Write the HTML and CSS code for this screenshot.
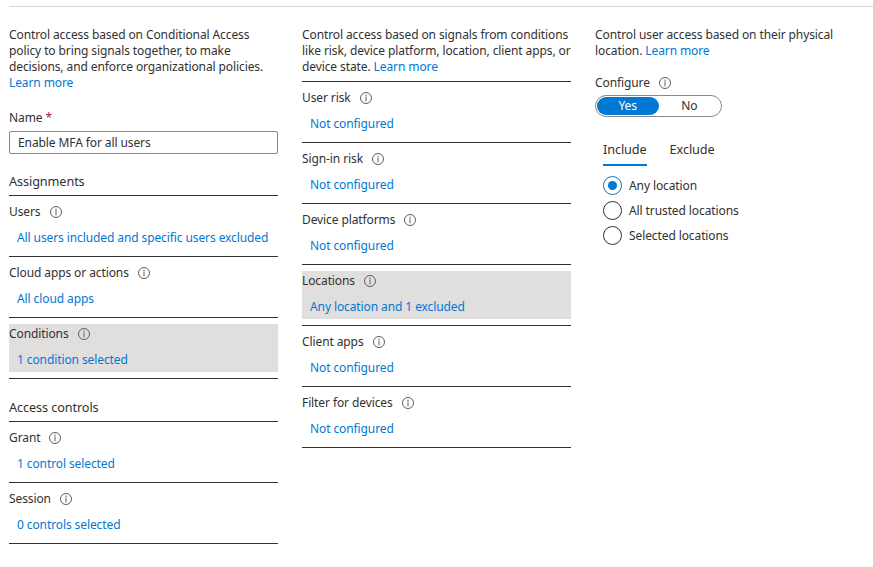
FILE: index.html
```html
<!DOCTYPE html>
<html lang="en">
<head>
<meta charset="utf-8">
<title>Conditional Access policy</title>
<link rel="stylesheet" href="styles.css">
</head>
<body>
<div class="page">
  <div class="topline"></div>
  <div class="columns">
    <section class="col">
      <p class="desc">Control access based on Conditional Access<br>policy to bring signals together, to make<br>decisions, and enforce organizational policies.<br><a class="link" href="#">Learn more</a></p>
      <label class="field-label">Name <span class="req">*</span></label>
      <div class="input">Enable MFA for all users</div>
      <h2 class="section-title">Assignments</h2>
      <div class="row"><div class="row-inner">
        <div class="row-label">Users <svg class="info" viewBox="0 0 12 12"><circle cx="6" cy="6" r="5.5"/><line x1="6" y1="5" x2="6" y2="9"/><line x1="6" y1="3" x2="6" y2="3.8"/></svg></div>
        <a class="row-link" href="#">All users included and specific users excluded</a>
      </div></div>
      <div class="row"><div class="row-inner">
        <div class="row-label">Cloud apps or actions <svg class="info" viewBox="0 0 12 12"><circle cx="6" cy="6" r="5.5"/><line x1="6" y1="5" x2="6" y2="9"/><line x1="6" y1="3" x2="6" y2="3.8"/></svg></div>
        <a class="row-link" href="#">All cloud apps</a>
      </div></div>
      <div class="row"><div class="row-inner selected">
        <div class="row-label">Conditions <svg class="info" viewBox="0 0 12 12"><circle cx="6" cy="6" r="5.5"/><line x1="6" y1="5" x2="6" y2="9"/><line x1="6" y1="3" x2="6" y2="3.8"/></svg></div>
        <a class="row-link" href="#">1 condition selected</a>
      </div></div>
      <h2 class="section-title second">Access controls</h2>
      <div class="row"><div class="row-inner">
        <div class="row-label">Grant <svg class="info" viewBox="0 0 12 12"><circle cx="6" cy="6" r="5.5"/><line x1="6" y1="5" x2="6" y2="9"/><line x1="6" y1="3" x2="6" y2="3.8"/></svg></div>
        <a class="row-link" href="#">1 control selected</a>
      </div></div>
      <div class="row"><div class="row-inner">
        <div class="row-label">Session <svg class="info" viewBox="0 0 12 12"><circle cx="6" cy="6" r="5.5"/><line x1="6" y1="5" x2="6" y2="9"/><line x1="6" y1="3" x2="6" y2="3.8"/></svg></div>
        <a class="row-link" href="#">0 controls selected</a>
      </div></div>
    </section>

    <section class="col">
      <p class="desc desc-ruled">Control access based on signals from conditions<br>like risk, device platform, location, client apps, or<br>device state. <a class="link" href="#">Learn more</a></p>
      <div class="row"><div class="row-inner">
        <div class="row-label">User risk <svg class="info" viewBox="0 0 12 12"><circle cx="6" cy="6" r="5.5"/><line x1="6" y1="5" x2="6" y2="9"/><line x1="6" y1="3" x2="6" y2="3.8"/></svg></div>
        <a class="row-link" href="#">Not configured</a>
      </div></div>
      <div class="row"><div class="row-inner">
        <div class="row-label">Sign-in risk <svg class="info" viewBox="0 0 12 12"><circle cx="6" cy="6" r="5.5"/><line x1="6" y1="5" x2="6" y2="9"/><line x1="6" y1="3" x2="6" y2="3.8"/></svg></div>
        <a class="row-link" href="#">Not configured</a>
      </div></div>
      <div class="row"><div class="row-inner">
        <div class="row-label">Device platforms <svg class="info" viewBox="0 0 12 12"><circle cx="6" cy="6" r="5.5"/><line x1="6" y1="5" x2="6" y2="9"/><line x1="6" y1="3" x2="6" y2="3.8"/></svg></div>
        <a class="row-link" href="#">Not configured</a>
      </div></div>
      <div class="row"><div class="row-inner selected">
        <div class="row-label">Locations <svg class="info" viewBox="0 0 12 12"><circle cx="6" cy="6" r="5.5"/><line x1="6" y1="5" x2="6" y2="9"/><line x1="6" y1="3" x2="6" y2="3.8"/></svg></div>
        <a class="row-link" href="#">Any location and 1 excluded</a>
      </div></div>
      <div class="row"><div class="row-inner">
        <div class="row-label">Client apps <svg class="info" viewBox="0 0 12 12"><circle cx="6" cy="6" r="5.5"/><line x1="6" y1="5" x2="6" y2="9"/><line x1="6" y1="3" x2="6" y2="3.8"/></svg></div>
        <a class="row-link" href="#">Not configured</a>
      </div></div>
      <div class="row"><div class="row-inner">
        <div class="row-label">Filter for devices <svg class="info" viewBox="0 0 12 12"><circle cx="6" cy="6" r="5.5"/><line x1="6" y1="5" x2="6" y2="9"/><line x1="6" y1="3" x2="6" y2="3.8"/></svg></div>
        <a class="row-link" href="#">Not configured</a>
      </div></div>
    </section>

    <section class="col">
      <p class="desc">Control user access based on their physical<br>location. <a class="link" href="#">Learn more</a></p>
      <div class="field-label configure">Configure <svg class="info" viewBox="0 0 12 12"><circle cx="6" cy="6" r="5.5"/><line x1="6" y1="5" x2="6" y2="9"/><line x1="6" y1="3" x2="6" y2="3.8"/></svg></div>
      <div class="toggle">
        <span class="seg on">Yes</span>
        <span class="seg">No</span>
      </div>
      <div class="tabs">
        <span class="tab active">Include</span>
        <span class="tab">Exclude</span>
      </div>
      <div class="radios">
        <div class="radio checked"><span class="dot"></span>Any location</div>
        <div class="radio"><span class="dot"></span>All trusted locations</div>
        <div class="radio"><span class="dot"></span>Selected locations</div>
      </div>
    </section>
  </div>
</div>
</body>
</html>
```

FILE: styles.css
```css
* { box-sizing: border-box; }
html, body { margin: 0; padding: 0; background: #fff; }
body {
  font-family: "Noto Sans", "Open Sans", sans-serif;
  font-size: 12px;
  letter-spacing: -0.1px;
  color: #323130;
  line-height: 16px;
}
a { text-decoration: none; }
.link, .row-link { color: #0078d4; }

.page { padding: 6px 0 0 9px; }
.topline { border-top: 1px solid #d8d8d8; }

.columns {
  display: grid;
  grid-template-columns: 269px 269px 269px;
  column-gap: 24px;
  margin-top: 20px;
  align-items: start;
}
.col { display: flex; flex-direction: column; }

.desc { margin: 0; line-height: 16px; white-space: nowrap; }
.desc-ruled { padding-bottom: 6px; border-bottom: 1px solid #323130; }

.field-label { display: block; margin-top: 19px; line-height: 16px; }
.req { color: #a4262c; }
.input {
  margin-top: 5px;
  height: 23px;
  border: 1px solid #8a8886;
  border-radius: 2px;
  padding: 0 8px;
  line-height: 21px;
}

.section-title {
  margin: 17px 0 0;
  font-size: 12.7px;
  font-weight: 400;
  line-height: 20px;
  padding-bottom: 4px;
  border-bottom: 1px solid #323130;
}
.section-title.second { margin-top: 18px; }

.row { padding: 6px 0; border-bottom: 1px solid #323130; }
.row-inner {
  height: 48px;
  padding-top: 2px;
  display: flex;
  flex-direction: column;
  gap: 10px;
}
.row-inner.selected { background: #e1dfdd; }
.row-label { display: flex; align-items: center; line-height: 16px; white-space: nowrap; }
.row-link { display: block; padding-left: 8px; line-height: 16px; white-space: nowrap; }

.info {
  width: 12px;
  height: 12px;
  margin-left: 9px;
  fill: none;
  stroke: #605e5c;
  stroke-width: 1;
}
.info line { stroke-linecap: round; }

.configure { display: flex; align-items: center; margin-top: 16px; }

.toggle {
  margin-top: 4px;
  width: 127px;
  height: 22px;
  border: 1px solid #8a8886;
  border-radius: 11px;
  padding: 1px;
  display: flex;
}
.seg {
  flex: 1;
  border-radius: 9px;
  text-align: center;
  line-height: 18px;
}
.seg.on { background: #0078d4; color: #fff; }

.tabs { display: flex; gap: 23px; margin-top: 24px; padding-left: 8px; }
.tab { font-size: 12.7px; line-height: 16px; padding-bottom: 7px; border-bottom: 2px solid transparent; }
.tab.active { border-bottom-color: #0078d4; }

.radios { margin-top: 7px; padding-left: 8px; }
.radio { display: flex; align-items: center; height: 25px; }
.dot {
  width: 19px;
  height: 19px;
  border: 1px solid #323130;
  border-radius: 50%;
  margin-right: 7px;
  position: relative;
  flex: none;
}
.radio.checked .dot { border-color: #0078d4; }
.radio.checked .dot::after {
  content: "";
  position: absolute;
  left: 4px;
  top: 4px;
  width: 9px;
  height: 9px;
  border-radius: 50%;
  background: #0078d4;
}
```
